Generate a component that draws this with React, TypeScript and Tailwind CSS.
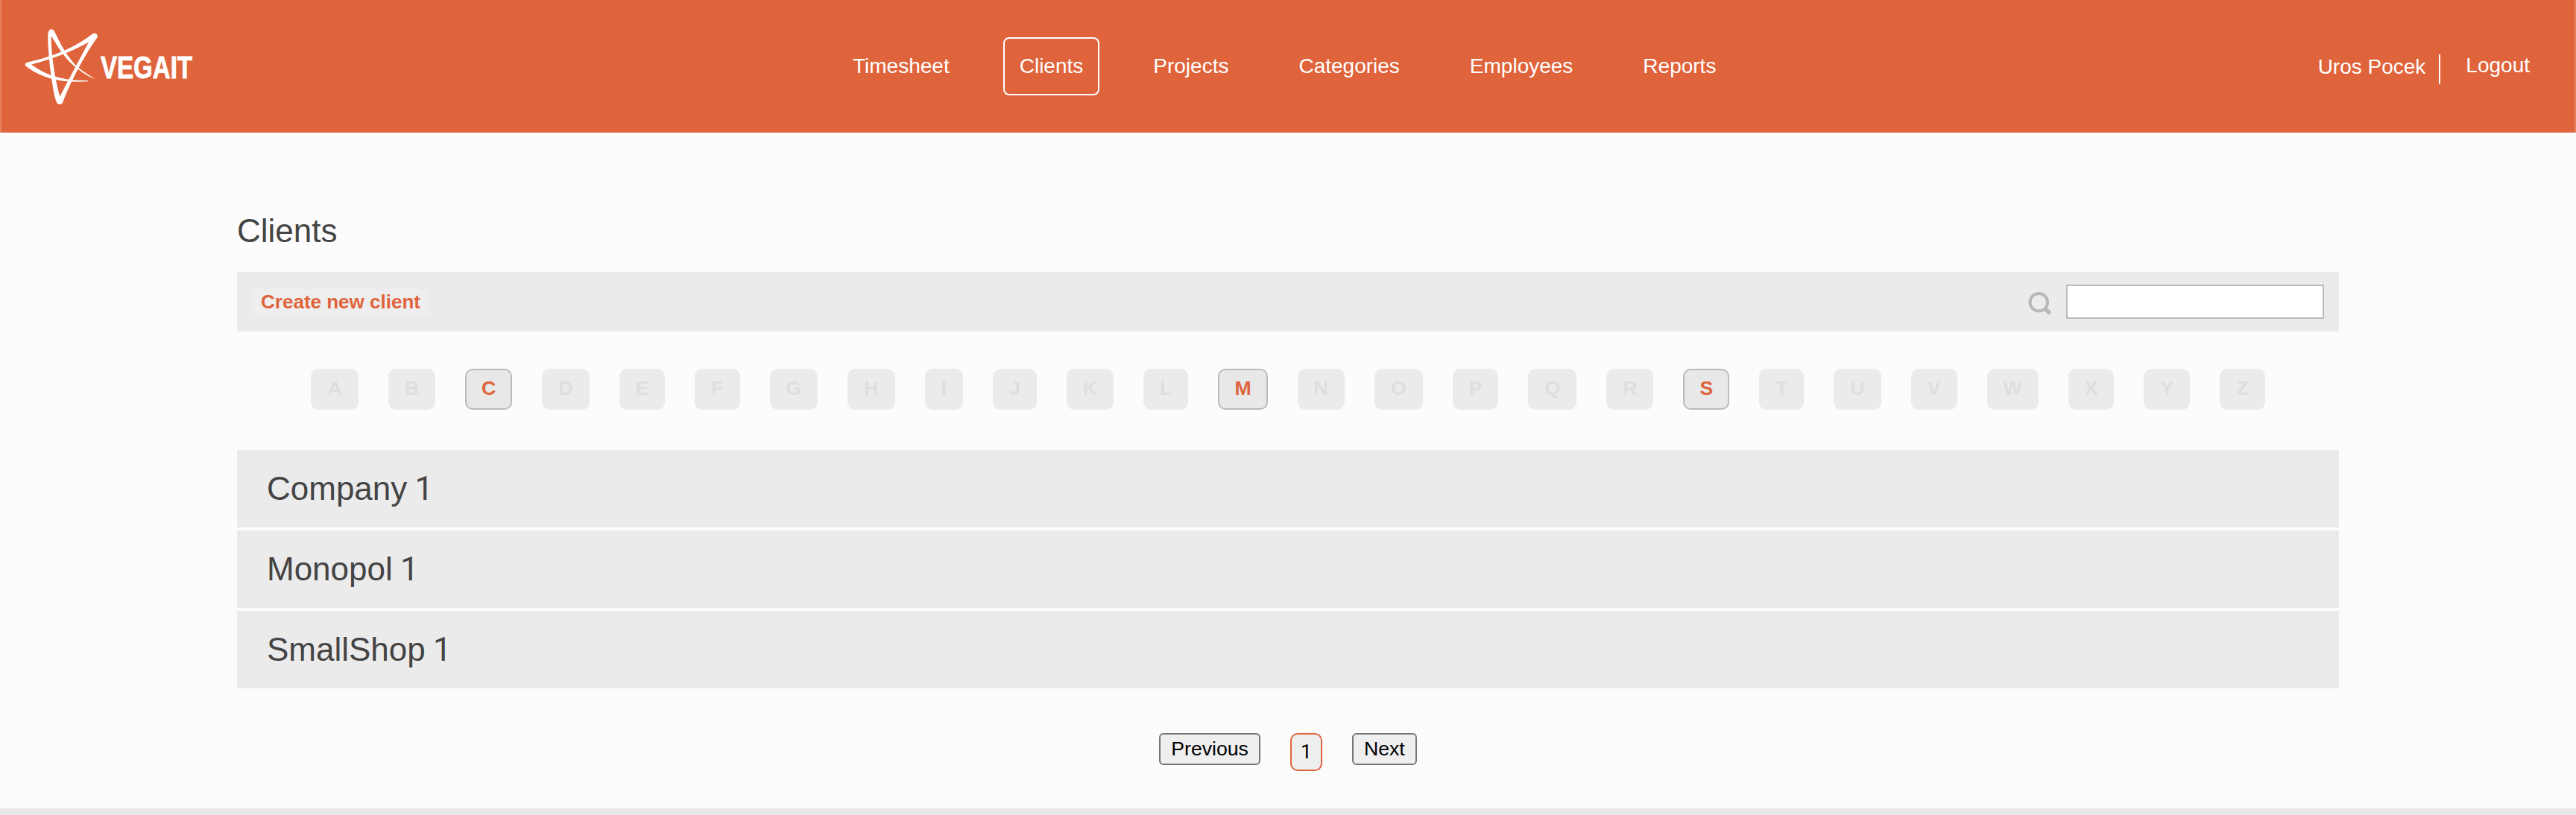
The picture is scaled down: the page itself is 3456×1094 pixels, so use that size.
const FONT = "font-['Liberation_Sans',Arial,sans-serif]";

type NavItem = { label: string; active?: boolean };

const NAV: NavItem[] = [
  { label: 'Timesheet' },
  { label: 'Clients', active: true },
  { label: 'Projects' },
  { label: 'Categories' },
  { label: 'Employees' },
  { label: 'Reports' },
];

const LETTERS = 'ABCDEFGHIJKLMNOPQRSTUVWXYZ'.split('');
const AVAILABLE = ['C', 'M', 'S'];
const CLIENTS = ['Company', 'Monopol', 'SmallShop'];

function Logo() {
  return (
    <svg className="block h-[178px] w-80" viewBox="0 0 320 178" fill="#fff">
      <g transform="translate(28 34) scale(0.33333)">
        <path d="M109 38 C110 12 128 10 136 26 L122 46 C121 120 142 240 159 292 C176 300 170 318 156 318 C146 318 142 306 139 296 C124 240 108 110 109 38Z" />
        <path d="M136 26 C157 68 184 128 233 172 C253 188 278 203 299 217 C276 207 250 193 230 176 C182 142 152 92 122 42Z" />
        <path d="M154 292 C189 226 236 136 274 66 L308 48 C262 112 200 224 169 310 C163 322 146 318 144 302Z" />
        <path d="M26 149 C100 132 196 105 286 36 C298 27 314 36 307 50 L270 70 C200 108 130 135 40 158 L20 164 C14 156 20 150 26 149Z" />
        <path d="M40 156 C100 202 170 223 269 222 L269 226 C170 233 84 214 24 167 C14 158 20 150 30 149Z" />
      </g>
      <text
        x="135"
        y="105"
        fontFamily="'Liberation Sans', Arial, sans-serif"
        fontWeight="700"
        fontSize="42.5"
        stroke="#fff"
        strokeWidth="0.9"
        textLength="123"
        lengthAdjust="spacingAndGlyphs"
      >
        VEGAIT
      </text>
    </svg>
  );
}

function One() {
  return <span className="font-[Roboto]">1</span>;
}

export default function App() {
  return (
    <div className={`flex h-[1094px] w-[3456px] flex-col overflow-hidden bg-[#fcfcfc] text-[#444] ${FONT}`}>
      <header className="grid h-[178px] shrink-0 grid-cols-[1122px_1fr_auto] items-start border-x-2 border-[#e58260] bg-[#df643c] text-[28px] leading-8 text-white">
        <div className="-ml-0.5">
          <Logo />
        </div>
        <nav className="-ml-0.5 mt-[50px] flex gap-[50px]">
          {NAV.map((n) => (
            <a
              key={n.label}
              className={`h-[78px] rounded-lg border-2 px-5 pt-[21px] ${n.active ? 'border-white' : 'border-transparent'}`}
            >
              {n.label}
            </a>
          ))}
        </nav>
        <div className="mr-[60px] mt-[73px] flex items-start">
          <span className="h-10 pr-[18px] pt-px">Uros Pocek</span>
          <span className="h-10 w-0.5 bg-white" />
          <span className="-mt-px ml-[34px]">Logout</span>
        </div>
      </header>

      <main className="mx-[318px] grow pt-[107px]">
        <h1 className="h-20 text-[44px] leading-[50px]">Clients</h1>

        <div className="flex h-20 items-center justify-between bg-[#ebebeb] px-5">
          <button className="h-[35px] w-[238px] bg-[#eee] text-[26px] font-bold leading-[35px] text-[#df643c]">
            Create new client
          </button>
          <div className="flex items-center">
            <svg className="mr-5 mt-1 h-8 w-8" viewBox="0 0 32 32" fill="none" stroke="#b8b8b8">
              <circle cx="15.3" cy="14.8" r="11.8" strokeWidth="4" />
              <path d="M23 22.5 L30.5 30" strokeWidth="5.5" />
            </svg>
            <input className="h-[46px] w-[346px] border-2 border-[#bbb] bg-white" />
          </div>
        </div>

        <div className="mt-[50px] flex justify-center gap-10">
          {LETTERS.map((l) => (
            <button
              key={l}
              className={`h-[55px] rounded-[10px] border-2 px-5 pb-[3px] text-[26.67px] font-bold leading-[48px] ${
                AVAILABLE.includes(l)
                  ? 'border-[#bbb] bg-[#e8e8e8] text-[#df643c]'
                  : 'border-[#ebebeb] bg-[#ebebeb] text-[#dedede]'
              }`}
            >
              {l}
            </button>
          ))}
        </div>

        <ul className="mt-[54px] flex flex-col gap-1">
          {CLIENTS.map((c) => (
            <li key={c} className="h-[104px] bg-[#ebebeb] pl-10 pt-[27px] text-[44px] leading-[50px]">
              {c} <span className="-ml-0.5"><One /></span>
            </li>
          ))}
        </ul>

        <div className="mt-[60px] flex items-start justify-center gap-10 text-[26.67px] leading-[31px] text-black">
          <button className="h-[43px] rounded-md border-2 border-[#767676] bg-[#efefef] px-[14px] pb-px">
            Previous
          </button>
          <button className="h-[51px] rounded-[10px] border-2 border-[#df643c] bg-[#efefef] px-3">
            <One />
          </button>
          <button className="h-[43px] rounded-md border-2 border-[#767676] bg-[#efefef] px-[14px] pb-px">
            Next
          </button>
        </div>
      </main>

      <footer className="h-[9px] shrink-0 bg-[#e8e8e8]" />
    </div>
  );
}
